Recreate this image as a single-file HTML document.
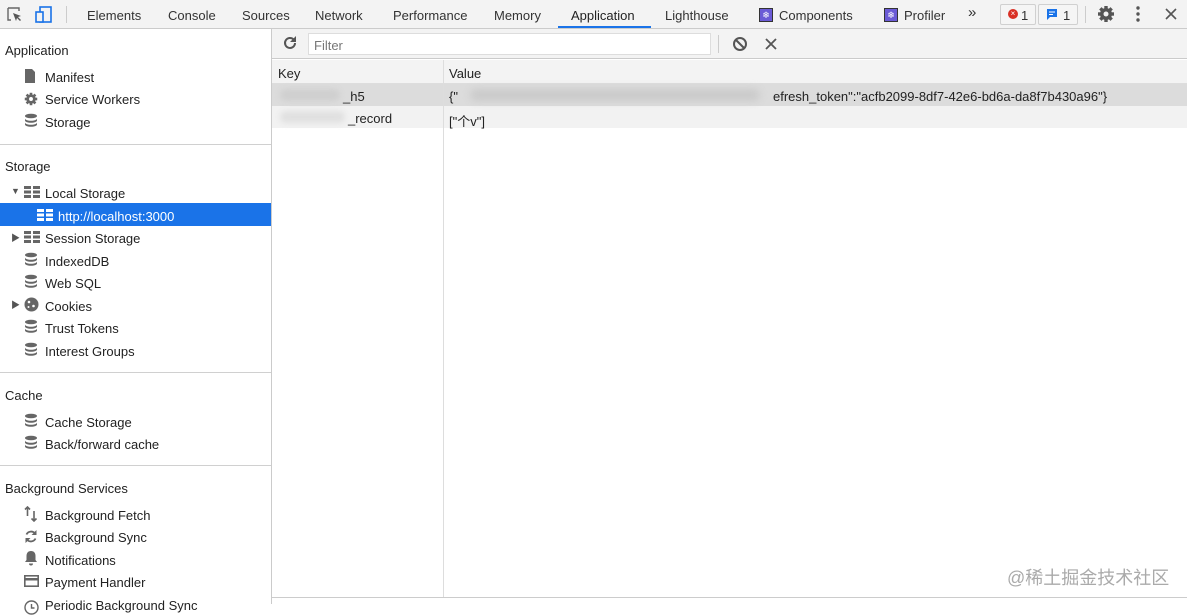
<!DOCTYPE html>
<html><head><meta charset="utf-8"><style>
*{box-sizing:border-box;margin:0;padding:0}
body{width:1187px;height:604px;overflow:hidden;background:#fff;font-family:"Liberation Sans","Noto Sans CJK SC",sans-serif;font-size:13px;color:#222;position:relative}
.a{position:absolute;white-space:nowrap}
.top{position:absolute;left:0;top:0;width:1187px;height:29px;background:#f3f3f3;border-bottom:1px solid #cbcbcb}
.tab{position:absolute;top:8px;color:#333}
.side{position:absolute;left:0;top:29px;width:272px;height:575px;border-right:1px solid #cbcbcb;background:#fff}
.hdr{position:absolute;left:5px;color:#222}
.it{position:absolute;left:45px;color:#222}
.ic{position:absolute;left:24px}
.sep{position:absolute;left:0;width:271px;height:1px;background:#d0d0d0}
</style></head><body>
<div class="top">
<svg class="a" style="left:6px;top:6px" width="18" height="18" viewBox="0 0 18 18"><path d="M2 2h11v3M2 2v12h3" fill="none" stroke="#666" stroke-width="1.4"/><path d="M7 7l8 3-3 1 3 3-1 1-3-3-1 3z" fill="#555"/></svg>
<svg class="a" style="left:34px;top:5px" width="20" height="20" viewBox="0 0 20 20"><rect x="6" y="2" width="11" height="15" fill="none" stroke="#1a73e8" stroke-width="1.6"/><rect x="2" y="7" width="7" height="10" fill="#f3f3f3" stroke="#1a73e8" stroke-width="1.6"/></svg>
<div class="a" style="left:66px;top:6px;width:1px;height:17px;background:#ccc"></div>
<span class="tab" style="left:87px">Elements</span>
<span class="tab" style="left:168px">Console</span>
<span class="tab" style="left:242px">Sources</span>
<span class="tab" style="left:315px">Network</span>
<span class="tab" style="left:393px">Performance</span>
<span class="tab" style="left:494px">Memory</span>
<span class="tab" style="left:571px;color:#222">Application</span>
<div class="a" style="left:558px;top:26px;width:93px;height:2px;background:#1a73e8"></div>
<span class="tab" style="left:665px">Lighthouse</span>
<div class="a" style="left:759px;top:8px;width:14px;height:14px;background:#6b5bd6;border:1px solid #333;color:#fff;font-size:9px;text-align:center;line-height:12px">❄</div>
<span class="tab" style="left:779px">Components</span>
<div class="a" style="left:884px;top:8px;width:14px;height:14px;background:#6b5bd6;border:1px solid #333;color:#fff;font-size:9px;text-align:center;line-height:12px">❄</div>
<span class="tab" style="left:904px">Profiler</span>
<span class="tab" style="left:968px;top:4px;font-size:15px">»</span>
<div class="a" style="left:1000px;top:4px;width:36px;height:21px;border:1px solid #d0d0d0;border-radius:2px;background:#f5f5f5"></div>
<div class="a" style="left:1008px;top:9px;width:10px;height:10px;border-radius:50%;background:#d93025;color:#fff;font-size:8px;line-height:10px;text-align:center">×</div>
<span class="tab" style="left:1021px">1</span>
<div class="a" style="left:1038px;top:4px;width:40px;height:21px;border:1px solid #d0d0d0;border-radius:2px;background:#f5f5f5"></div>
<svg class="a" style="left:1046px;top:8px" width="12" height="12" viewBox="0 0 12 12"><path d="M1 1h10v8H4l-3 3z" fill="#1a73e8"/><path d="M3 4h6M3 6.5h4" stroke="#fff"/></svg>
<span class="tab" style="left:1063px">1</span>
<div class="a" style="left:1085px;top:6px;width:1px;height:17px;background:#ccc"></div>
<svg class="a" style="left:1097px;top:5px" width="18" height="18" viewBox="0 0 18 18"><g fill="#555"><circle cx="9" cy="9" r="6"/><rect x="7.3" y="1" width="3.4" height="16"/><rect x="7.3" y="1" width="3.4" height="16" transform="rotate(45 9 9)"/><rect x="7.3" y="1" width="3.4" height="16" transform="rotate(90 9 9)"/><rect x="7.3" y="1" width="3.4" height="16" transform="rotate(135 9 9)"/></g><circle cx="9" cy="9" r="2.5" fill="#f3f3f3"/></svg>
<svg class="a" style="left:1136px;top:6px" width="4" height="16" viewBox="0 0 4 16"><circle cx="2" cy="2" r="1.7" fill="#555"/><circle cx="2" cy="8" r="1.7" fill="#555"/><circle cx="2" cy="14" r="1.7" fill="#555"/></svg>
<svg class="a" style="left:1165px;top:8px" width="12" height="12" viewBox="0 0 12 12"><path d="M1 1l10 10M11 1L1 11" stroke="#555" stroke-width="1.6"/></svg>
</div>

<div class="side">
<span class="hdr" style="top:14px">Application</span>
<svg class="ic" style="top:39px" width="12" height="16" viewBox="0 0 12 16"><path d="M1 1h7l3 3v11H1z" fill="#666"/></svg><span class="it" style="top:41px">Manifest</span>
<svg class="ic" style="top:63px" width="14" height="14" viewBox="0 0 18 18"><g fill="#666"><circle cx="9" cy="9" r="6"/><rect x="7.3" y="1" width="3.4" height="16"/><rect x="7.3" y="1" width="3.4" height="16" transform="rotate(45 9 9)"/><rect x="7.3" y="1" width="3.4" height="16" transform="rotate(90 9 9)"/><rect x="7.3" y="1" width="3.4" height="16" transform="rotate(135 9 9)"/></g><circle cx="9" cy="9" r="2.5" fill="#fff"/></svg><span class="it" style="top:63px">Service Workers</span>
<svg class="ic" style="top:84px" width="14" height="16" viewBox="0 0 14 16"><ellipse cx="7" cy="3" rx="6" ry="2.3" fill="#666"/><path d="M1 5.5c0 1.3 2.7 2.3 6 2.3s6-1 6-2.3v2c0 1.3-2.7 2.3-6 2.3s-6-1-6-2.3zM1 9.5c0 1.3 2.7 2.3 6 2.3s6-1 6-2.3v2c0 1.3-2.7 2.3-6 2.3s-6-1-6-2.3z" fill="#666"/></svg><span class="it" style="top:86px">Storage</span>
<div class="sep" style="top:115px"></div>
<span class="hdr" style="top:130px">Storage</span>
<span class="a" style="left:11px;top:157px;font-size:9px;color:#555">▼</span>
<svg class="ic" style="top:157px" width="16" height="12" viewBox="0 0 16 12"><path d="M0 0h7v3H0zM9 0h7v3H9zM0 4.5h7v3H0zM9 4.5h7v3H9zM0 9h7v3H0zM9 9h7v3H9z" fill="#666"/></svg><span class="it" style="top:157px">Local Storage</span>
<div class="a" style="left:0;top:174px;width:271px;height:23px;background:#1a73e8"></div>
<svg class="a" style="left:37px;top:180px" width="16" height="12" viewBox="0 0 16 12"><path d="M0 0h7v3H0zM9 0h7v3H9zM0 4.5h7v3H0zM9 4.5h7v3H9zM0 9h7v3H0zM9 9h7v3H9z" fill="#fff"/></svg><span class="a" style="left:58px;top:180px;color:#fff">http://localhost:3000</span>
<span class="a" style="left:11px;top:202px;font-size:9px;color:#555">▶</span>
<svg class="ic" style="top:202px" width="16" height="12" viewBox="0 0 16 12"><path d="M0 0h7v3H0zM9 0h7v3H9zM0 4.5h7v3H0zM9 4.5h7v3H9zM0 9h7v3H0zM9 9h7v3H9z" fill="#666"/></svg><span class="it" style="top:202px">Session Storage</span>
<svg class="ic" style="top:223px" width="14" height="16" viewBox="0 0 14 16"><ellipse cx="7" cy="3" rx="6" ry="2.3" fill="#666"/><path d="M1 5.5c0 1.3 2.7 2.3 6 2.3s6-1 6-2.3v2c0 1.3-2.7 2.3-6 2.3s-6-1-6-2.3zM1 9.5c0 1.3 2.7 2.3 6 2.3s6-1 6-2.3v2c0 1.3-2.7 2.3-6 2.3s-6-1-6-2.3z" fill="#666"/></svg><span class="it" style="top:225px">IndexedDB</span>
<svg class="ic" style="top:245px" width="14" height="16" viewBox="0 0 14 16"><ellipse cx="7" cy="3" rx="6" ry="2.3" fill="#666"/><path d="M1 5.5c0 1.3 2.7 2.3 6 2.3s6-1 6-2.3v2c0 1.3-2.7 2.3-6 2.3s-6-1-6-2.3zM1 9.5c0 1.3 2.7 2.3 6 2.3s6-1 6-2.3v2c0 1.3-2.7 2.3-6 2.3s-6-1-6-2.3z" fill="#666"/></svg><span class="it" style="top:247px">Web SQL</span>
<span class="a" style="left:11px;top:269px;font-size:9px;color:#555">▶</span>
<svg class="ic" style="top:268px" width="15" height="15" viewBox="0 0 15 15"><circle cx="7.5" cy="7.5" r="7" fill="#666"/><circle cx="5" cy="5" r="1.3" fill="#fff"/><circle cx="9.5" cy="9" r="1.3" fill="#fff"/><circle cx="4.5" cy="10" r="1" fill="#fff"/></svg><span class="it" style="top:270px">Cookies</span>
<svg class="ic" style="top:290px" width="14" height="16" viewBox="0 0 14 16"><ellipse cx="7" cy="3" rx="6" ry="2.3" fill="#666"/><path d="M1 5.5c0 1.3 2.7 2.3 6 2.3s6-1 6-2.3v2c0 1.3-2.7 2.3-6 2.3s-6-1-6-2.3zM1 9.5c0 1.3 2.7 2.3 6 2.3s6-1 6-2.3v2c0 1.3-2.7 2.3-6 2.3s-6-1-6-2.3z" fill="#666"/></svg><span class="it" style="top:292px">Trust Tokens</span>
<svg class="ic" style="top:313px" width="14" height="16" viewBox="0 0 14 16"><ellipse cx="7" cy="3" rx="6" ry="2.3" fill="#666"/><path d="M1 5.5c0 1.3 2.7 2.3 6 2.3s6-1 6-2.3v2c0 1.3-2.7 2.3-6 2.3s-6-1-6-2.3zM1 9.5c0 1.3 2.7 2.3 6 2.3s6-1 6-2.3v2c0 1.3-2.7 2.3-6 2.3s-6-1-6-2.3z" fill="#666"/></svg><span class="it" style="top:315px">Interest Groups</span>
<div class="sep" style="top:343px"></div>
<span class="hdr" style="top:359px">Cache</span>
<svg class="ic" style="top:384px" width="14" height="16" viewBox="0 0 14 16"><ellipse cx="7" cy="3" rx="6" ry="2.3" fill="#666"/><path d="M1 5.5c0 1.3 2.7 2.3 6 2.3s6-1 6-2.3v2c0 1.3-2.7 2.3-6 2.3s-6-1-6-2.3zM1 9.5c0 1.3 2.7 2.3 6 2.3s6-1 6-2.3v2c0 1.3-2.7 2.3-6 2.3s-6-1-6-2.3z" fill="#666"/></svg><span class="it" style="top:386px">Cache Storage</span>
<svg class="ic" style="top:406px" width="14" height="16" viewBox="0 0 14 16"><ellipse cx="7" cy="3" rx="6" ry="2.3" fill="#666"/><path d="M1 5.5c0 1.3 2.7 2.3 6 2.3s6-1 6-2.3v2c0 1.3-2.7 2.3-6 2.3s-6-1-6-2.3zM1 9.5c0 1.3 2.7 2.3 6 2.3s6-1 6-2.3v2c0 1.3-2.7 2.3-6 2.3s-6-1-6-2.3z" fill="#666"/></svg><span class="it" style="top:408px">Back/forward cache</span>
<div class="sep" style="top:436px"></div>
<span class="hdr" style="top:452px">Background Services</span>
<svg class="ic" style="top:477px" width="14" height="16" viewBox="0 0 14 16"><path d="M3.5 1v9M1 3.5l2.5-2.5 2.5 2.5M10 5v10M7.5 12.5l2.5 2.5 2.5-2.5" fill="none" stroke="#666" stroke-width="1.6"/></svg><span class="it" style="top:479px">Background Fetch</span>
<svg class="ic" style="top:500px" width="14" height="15" viewBox="0 0 14 15"><path d="M11 4.5A5 5 0 0 0 2.5 5.5M3 10.5A5 5 0 0 0 11.5 9.5" fill="none" stroke="#666" stroke-width="1.8"/><path d="M12.5 1v5h-5zM1.5 14V9h5z" fill="#666"/></svg><span class="it" style="top:501px">Background Sync</span>
<svg class="ic" style="top:521px" width="14" height="16" viewBox="0 0 14 16"><path d="M7 1c3 0 4.5 2 4.5 5v4l1.5 2H1l1.5-2V6C2.5 3 4 1 7 1zM5 13.5h4a2 2 0 0 1-4 0z" fill="#666"/></svg><span class="it" style="top:524px">Notifications</span>
<svg class="ic" style="top:546px" width="15" height="12" viewBox="0 0 15 12"><rect x="0.8" y="0.8" width="13.4" height="10.4" fill="none" stroke="#666" stroke-width="1.6"/><rect x="1" y="3" width="13" height="2.5" fill="#666"/></svg><span class="it" style="top:546px">Payment Handler</span>
<svg class="ic" style="top:571px" width="15" height="15" viewBox="0 0 15 15"><circle cx="7.5" cy="7.5" r="6.5" fill="none" stroke="#666" stroke-width="1.4"/><path d="M7.5 4v4h3" fill="none" stroke="#666" stroke-width="1.4"/></svg><span class="it" style="top:569px">Periodic Background Sync</span>
</div>

<div class="a" style="left:272px;top:29px;width:915px;height:30px;background:#f3f3f3;border-bottom:1px solid #cbcbcb"></div>
<svg class="a" style="left:282px;top:35px" width="16" height="16" viewBox="0 0 16 16"><path d="M13 8a5 5 0 1 1-1.5-3.6" fill="none" stroke="#555" stroke-width="2"/><path d="M14 1v6h-6z" fill="#555"/></svg>
<div class="a" style="left:308px;top:33px;width:403px;height:22px;background:#fff;border:1px solid #ddd"></div>
<span class="a" style="left:314px;top:38px;color:#777">Filter</span>
<div class="a" style="left:718px;top:35px;width:1px;height:18px;background:#ccc"></div>
<svg class="a" style="left:732px;top:36px" width="16" height="16" viewBox="0 0 16 16"><circle cx="8" cy="8" r="6" fill="none" stroke="#555" stroke-width="2"/><path d="M4 4l8 8" stroke="#555" stroke-width="2"/></svg>
<svg class="a" style="left:765px;top:38px" width="12" height="12" viewBox="0 0 12 12"><path d="M1 1l10 10M11 1L1 11" stroke="#555" stroke-width="1.8"/></svg>

<div class="a" style="left:272px;top:60px;width:915px;height:24px;background:#f3f3f3;border-bottom:1px solid #ddd"></div>
<span class="a" style="left:278px;top:66px">Key</span>
<span class="a" style="left:449px;top:66px">Value</span>
<div class="a" style="left:272px;top:84px;width:915px;height:22px;background:#dcdcdc"></div>
<div class="a" style="left:272px;top:106px;width:915px;height:22px;background:#f2f2f2"></div>
<div class="a" style="left:280px;top:89px;width:60px;height:12px;background:#cfcfcf;border-radius:6px;filter:blur(3px)"></div>
<div class="a" style="left:280px;top:111px;width:65px;height:12px;background:#e0e0e0;border-radius:6px;filter:blur(3px)"></div>
<div class="a" style="left:470px;top:89px;width:290px;height:12px;background:#cacaca;border-radius:6px;filter:blur(4px)"></div>
<span class="a" style="left:343px;top:89px">_h5</span>
<span class="a" style="left:348px;top:111px">_record</span>
<span class="a" style="left:449px;top:89px">{"</span>
<span class="a" style="left:773px;top:89px">efresh_token":"acfb2099-8df7-42e6-bd6a-da8f7b430a96"}</span>
<span class="a" style="left:449px;top:111px">["个v"]</span>
<div class="a" style="left:443px;top:60px;width:1px;height:538px;background:#ddd"></div>
<div class="a" style="left:272px;top:597px;width:915px;height:1px;background:#ccc"></div>
<span class="a" style="left:1007px;top:564px;font-size:18px;color:#aaa">@稀土掘金技术社区</span>
</body></html>
